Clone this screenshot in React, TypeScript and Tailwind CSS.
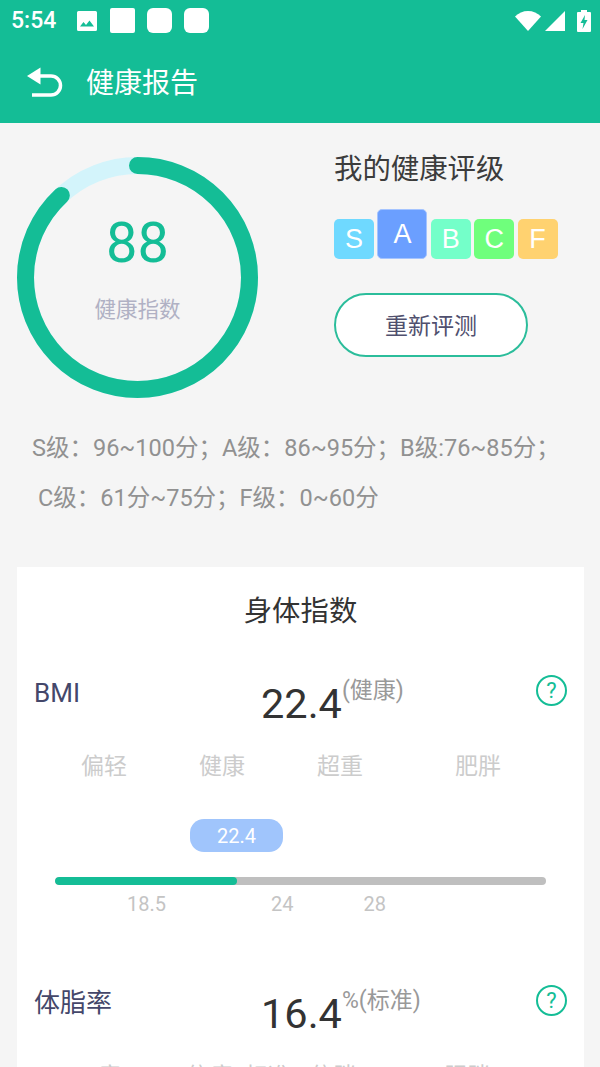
// App.tsx
import React from 'react';

interface RangeLabel {
    text: string;
    ml: number;
}

const grades = [
    { name: 'S', cls: 'h-10 w-10 bg-[#6fd9ff]' },
    { name: 'A', cls: 'h-[50px] w-[50px] bg-[#6b9fff] border border-[#a5c4ff]' },
    { name: 'B', cls: 'h-10 w-10 bg-[#74ffc9]' },
    { name: 'C', cls: 'h-10 w-10 bg-[#6fff7c]' },
    { name: 'F', cls: 'h-10 w-10 bg-[#ffd270]' },
];

const StatusBar = () => (
    <div className="flex h-[41px] items-center pl-[11px] pr-[9px] text-white">
        <span className="w-[66px] text-[23px] font-medium leading-none">5:54</span>
        <svg width="20" height="20" viewBox="0 0 20 20" className="mr-[13px]">
            <path
                fill="#fff"
                fillRule="evenodd"
                d="M1.5 0h17A1.5 1.5 0 0 1 20 1.5v17a1.5 1.5 0 0 1-1.5 1.5h-17A1.5 1.5 0 0 1 0 18.500v-17A1.500 1.500 0 0 1 1.500 0zM3 15.500h14l-4.500-6-3.500 4.500-2.500-3z"
            />
        </svg>
        <div className="flex gap-3">
            <div className="h-[25px] w-[25px] rounded-[2px] bg-white" />
            <div className="h-[25px] w-[25px] rounded-md bg-white" />
            <div className="h-[25px] w-[25px] rounded-md bg-white" />
        </div>
        <div className="ml-auto flex items-center">
            <svg width="26" height="20" viewBox="0 0 26 20">
                <path fill="#fff" d="M0 5.500C3.500 2 8 0 13 0s9.500 2 13 5.500L13 20z" />
            </svg>
            <svg width="20" height="20" viewBox="0 0 20 20" className="ml-[4px]">
                <path fill="#fff" d="M20 0v20H0z" />
            </svg>
            <svg width="14" height="22" viewBox="0 0 14 22" className="ml-3">
                <path
                    fill="#fff"
                    fillRule="evenodd"
                    d="M4 0h6v2h3a1 1 0 0 1 1 1v18a1 1 0 0 1-1 1H1a1 1 0 0 1-1-1V3a1 1 0 0 1 1-1h3zM8 5 3.500 13H6.500L5.500 19 10.500 10H7.500z"
                />
            </svg>
        </div>
    </div>
);

const HeaderBar = () => (
    <div className="flex h-[82px] items-center pl-[27px]">
        <svg width="36" height="30" viewBox="0 0 36 30" className="mb-[1px]">
            <path fill="#fff" d="M0 9 13.500 0.500V17.500z" />
            <path
                fill="none"
                stroke="#fff"
                strokeWidth="3.500"
                d="M11 9h13a9.500 9.500 0 0 1 0 19H5"
            />
        </svg>
        <h1 className="ml-[23px] pt-[3px] text-[28px] font-normal leading-none text-white">健康报告</h1>
    </div>
);

const ScoreRing = () => (
    <div className="grid h-[241px] w-[241px] shrink-0">
        <svg width="241" height="241" viewBox="0 0 241 241" className="col-start-1 row-start-1">
            <circle cx="120.500" cy="120.500" r="112" fill="none" stroke="#d3f4fb" strokeWidth="17" />
            <circle
                cx="120.500"
                cy="120.500"
                r="112"
                fill="none"
                stroke="#14bd96"
                strokeWidth="17"
                strokeLinecap="round"
                strokeDasharray="619.300 703.700"
                transform="rotate(-90 120.500 120.500)"
            />
        </svg>
        <div className="col-start-1 row-start-1 flex flex-col items-center pt-[51px]">
            <span className="text-[56px] leading-[70px] text-[#14bd96]">88</span>
            <span className="mt-[16px] text-[21.500px] leading-[32px] text-[#b0b1c4]">健康指数</span>
        </div>
    </div>
);

const GradePanel = () => (
    <div className="ml-[76px] flex flex-col">
        <h2 className="-mt-[5px] text-[28.400px] font-normal leading-[36px] text-[#3c3c3c]">我的健康评级</h2>
        <div className="mt-[21px] flex items-end gap-[3.400px]">
            {grades.map((grade) => (
                <div
                    key={grade.name}
                    className={`flex items-center justify-center rounded-[5px] font-['Liberation_Sans',sans-serif] text-[27px] text-white ${grade.cls}`}
                >
                    {grade.name}
                </div>
            ))}
        </div>
        <button className="mt-[34px] h-16 w-[194px] rounded-full border-2 border-[#2bbd9b] bg-white pt-[5px] text-[23px] text-[#50506e]">
            重新评测
        </button>
    </div>
);

const HelpIcon = () => (
    <div className="flex h-[31px] w-[31px] items-center justify-center rounded-full border-2 border-[#14bd96] text-[22px] leading-none text-[#14bd96]">
        ?
    </div>
);

const MetricRow = ({ label, value, note }: { label: string; value: string; note: string }) => (
    <div className="flex h-[54px] items-start">
        <span className="w-[227px] text-[26px] leading-[36px] text-[#44476a]">{label}</span>
        <span className="mt-[4px] text-[41.500px] leading-[50px] text-[#333333]">{value}</span>
        <span className="text-[23px] leading-[32px] text-[#999999]">{note}</span>
        <div className="ml-auto">
            <HelpIcon />
        </div>
    </div>
);

const RangeLabels = ({ items }: { items: RangeLabel[] }) => (
    <div className="flex text-[23px] leading-[32px] text-[#cccccc]">
        {items.map((item) => (
            <span key={item.text} style={{ marginLeft: item.ml }}>
                {item.text}
            </span>
        ))}
    </div>
);

const bmiLabels: RangeLabel[] = [
    { text: '偏轻', ml: 47 },
    { text: '健康', ml: 72 },
    { text: '超重', ml: 72 },
    { text: '肥胖', ml: 92 },
];

const fatLabels: RangeLabel[] = [
    { text: '瘦', ml: 63 },
    { text: '偏瘦', ml: 66 },
    { text: '标准', ml: 13 },
    { text: '偏胖', ml: 19 },
    { text: '肥胖', ml: 88 },
];

const App: React.FC = () => {
    return (
        <div className="h-[1067px] w-[600px] overflow-hidden bg-[#f5f5f5] font-[Roboto,'Noto_Sans_CJK_SC',sans-serif]">
            <div className="bg-[#14bd96]">
                <StatusBar />
                <HeaderBar />
            </div>

            {/* rating */}
            <div className="flex pl-[17px] pt-[34px]">
                <ScoreRing />
                <GradePanel />
            </div>

            {/* grade ranges */}
            <div className="mt-[25px] text-[23.500px] leading-[50px] text-[#919191]">
                <p className="pl-[32px]">S级：96~100分；A级：86~95分；B级:76~85分；</p>
                <p className="pl-[38px]">C级：61分~75分；F级：0~60分</p>
            </div>

            {/* body metrics */}
            <div className="ml-[17px] mt-[44px] w-[567px] bg-white px-[17px]">
                <h3 className="flex h-[88px] items-center justify-center pt-[2px] text-[28.400px] font-normal text-[#333333]">身体指数</h3>
                <div className="mt-[20px]">
                    <MetricRow label="BMI" value="22.4" note="(健康)" />
                </div>
                <div className="mt-[22px]">
                    <RangeLabels items={bmiLabels} />
                </div>
                <div className="ml-[156px] mt-[36px] flex h-[33px] w-[93px] items-center justify-center rounded-[14px] bg-[#a0c5fc] text-[20px] text-white">
                    22.4
                </div>
                <div className="ml-[21px] mt-[25px] h-2 w-[491px] overflow-hidden rounded-full bg-[#bfbfbf]">
                    <div className="h-full w-[182px] rounded-full bg-[#14bd96]" />
                </div>
                <div className="mt-[7px] flex text-[20px] leading-[24px] text-[#c4c4c4]">
                    <span className="ml-[93px]">18.5</span>
                    <span className="ml-[105px]">24</span>
                    <span className="ml-[70px]">28</span>
                </div>
                <div className="mt-[69px]">
                    <MetricRow label="体脂率" value="16.4" note="%(标准)" />
                </div>
                <div className="mt-[22px]">
                    <RangeLabels items={fatLabels} />
                </div>
            </div>
        </div>
    );
};

export default App;
